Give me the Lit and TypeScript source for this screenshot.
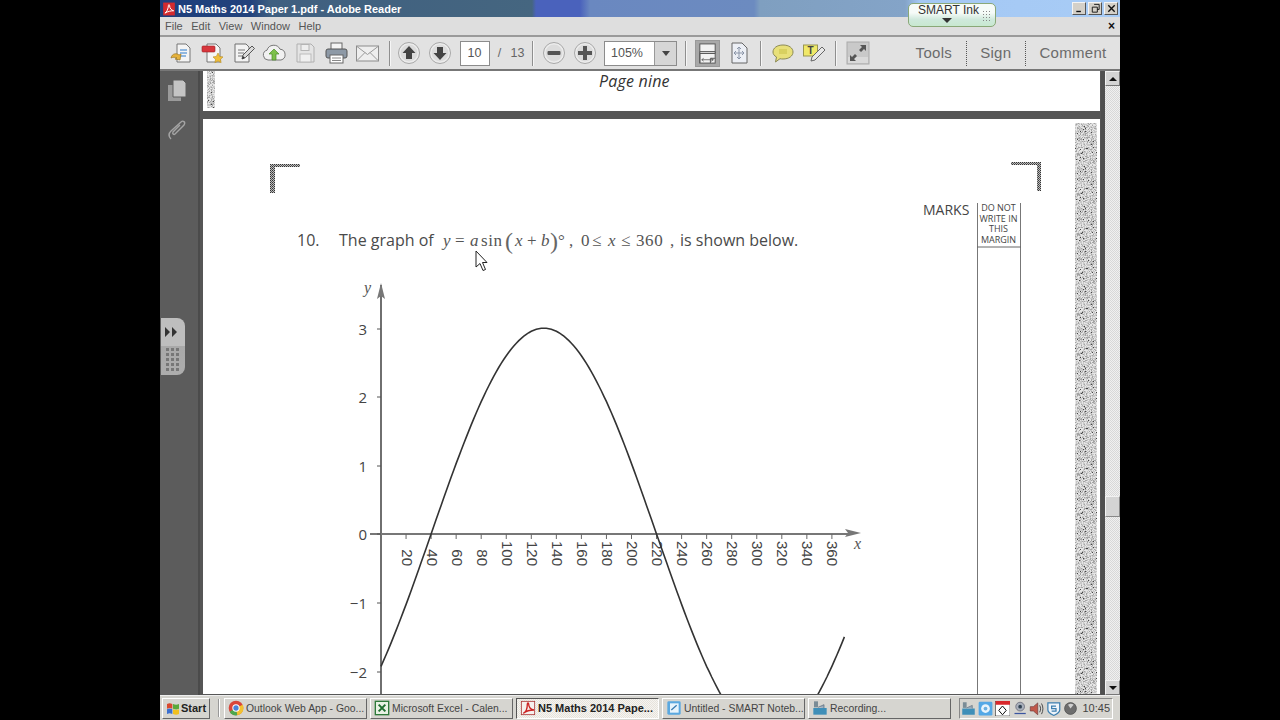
import { LitElement, html, css, svg } from 'lit';
import { customElement } from 'lit/decorators.js';

// seeded noise so the scanned speckle comes out the same each time
function speckle(id: string, size: number, dark: number) {
  let seed = 48271;
  const rnd = () => (seed = (seed * 16807) % 2147483647) / 2147483647;
  for (let i = 0; i < 10; i++) rnd();
  const dots = [];
  for (let y = 0; y < size; y++) {
    for (let x = 0; x < size; x++) {
      const r = rnd();
      if (r < dark) {
        const g = r < dark * 0.04 ? '#444' : r < dark * 0.35 ? '#a4a4a4' : '#c8c8c8';
        dots.push(svg`<rect x=${x} y=${y} width="1" height="1" fill=${g}></rect>`);
      }
    }
  }
  return svg`<pattern id=${id} width=${size} height=${size} patternUnits="userSpaceOnUse">
    <rect width=${size} height=${size} fill="#e6e6e6"></rect>${dots}</pattern>`;
}

const icon = (body: unknown, size = 24) =>
  html`<svg width=${size} height=${size} viewBox="0 0 24 24">${body}</svg>`;

const roundBtn = (glyph: unknown) => svg`
  <circle cx="12" cy="12" r="10.5" fill="#ececec" stroke="#a8a8a8"></circle>
  <circle cx="12" cy="12" r="8.5" fill="#dcdcdc"></circle>${glyph}`;

const TOOL_ICONS = {
  create: svg`<path d="M8 3h9l4 4v14H8z" fill="#f4f4f4" stroke="#777"></path>
    <path d="M11 9h7M11 12h7M11 15h6" stroke="#6fa3d8" stroke-width="1.4"></path>
    <path d="M2 17c1-5 6-5 8-3l2-1-1 6-5-1 2-1c-2-1-4-1-6 0z" fill="#e6b23c" stroke="#9a7420" stroke-width=".7"></path>`,
  pdfNew: svg`<path d="M7 3h9l4 4v14H7z" fill="#f6f6f6" stroke="#777"></path>
    <rect x="2" y="5" width="13" height="6" rx="1" fill="#d8363c" stroke="#9c2226" stroke-width=".6"></rect>
    <path d="M18 12l1.6 3.4 3.4.5-2.5 2.4.6 3.4-3.1-1.7-3.1 1.7.6-3.4L13 15.900l3.400-.5z" fill="#efbe3a" stroke="#b58a20" stroke-width=".6"></path>`,
  edit: svg`<path d="M4 3h11l3 3v15H4z" fill="#f3f3f3" stroke="#707070"></path>
    <path d="M7 9h7M7 12h6M7 15h5" stroke="#777"></path>
    <path d="M11 18l1-4 9-9 2.500 2.500-9 9z" fill="#d9d9d9" stroke="#555"></path>
    <path d="M11 18l1-3 2 2z" fill="#333"></path>`,
  cloud: svg`<path d="M6 19a5 5 0 0 1-1-9.800 7 7 0 0 1 13-1 5.500 5.500 0 0 1 1 10.800z" fill="#f1f1f1" stroke="#777"></path>
    <path d="M12 8l5 5h-3v6h-4v-6H7z" fill="#7cc04a" stroke="#4c8a28" stroke-width=".7"></path>`,
  save: svg`<path d="M4 3h14l3 3v15H4z" fill="#e4e4e4" stroke="#b0b0b0"></path>
    <rect x="8" y="3.500" width="8" height="6" fill="#eee" stroke="#b4b4b4"></rect>
    <rect x="7" y="13" width="11" height="8" fill="#f0f0f0" stroke="#bbb"></rect>`,
  print: svg`<rect x="7" y="2" width="11" height="7" fill="#f4f4f4" stroke="#666"></rect>
    <rect x="2" y="8" width="21" height="9" rx="2" fill="#8d99a6" stroke="#555"></rect>
    <rect x="6" y="14" width="13" height="8" fill="#fff" stroke="#666"></rect>
    <path d="M8 17h9M8 19.500h9" stroke="#888"></path>`,
  mail: svg`<rect x="1.500" y="5" width="22" height="15" fill="#eee" stroke="#8c8c8c"></rect>
    <path d="M2 5.500l10.500 8 10.500-8M2 19.500l8-8M23 19.500l-8-8" fill="none" stroke="#999"></path>`,
  up: roundBtn(svg`<path d="M12 5l6.500 7H15v6H9v-6H5.500z" fill="#444"></path>`),
  down: roundBtn(svg`<path d="M12 19l6.500-7H15V6H9v6H5.500z" fill="#444"></path>`),
  minus: roundBtn(svg`<rect x="5.500" y="10" width="13" height="4" rx="1" fill="#555"></rect>`),
  plus: roundBtn(svg`<path d="M10 5h4v5h5v4h-5v5h-4v-5H5v-4h5z" fill="#555"></path>`),
  fitWidth: svg`<rect x="4" y="2" width="16" height="20" fill="#f2f2f2" stroke="#555"></rect>
    <path d="M4 10h16v2H4zM4 12v10M15 22v-5l5 0" fill="#dcdcdc" stroke="#555"></path>
    <path d="M6 18.500h12M6 18.500l2-1.500M6 18.500l2 1.500M18 18.500l-2-1.500M18 18.500l-2 1.500" fill="none" stroke="#555" stroke-width=".8"></path>`,
  fitPage: svg`<path d="M5 2h10l5 5v15H5z" fill="#eceff5" stroke="#666"></path>
    <path d="M12 6v12M7 12h10M12 6l-2 2M12 6l2 2M12 18l-2-2M12 18l2-2M7 12l2-2M7 12l2 2M17 12l-2-2M17 12l-2 2" fill="none" stroke="#8a95a8"></path>`,
  comment: svg`<path d="M12 4c6 0 10 3 10 7s-4 7-10 7c-1 0-2 0-3-.3L4.500 21l1-5C3 14.700 2 13 2 11c0-4 4-7 10-7z" fill="#e8e07a" stroke="#8c8a55"></path>
    <rect x="8" y="8" width="8" height="5" fill="#d8d060"></rect>`,
  highlight: svg`<rect x="1.500" y="4" width="14" height="11" fill="#f0e868" stroke="#9a9650"></rect>
    <text x="8.500" y="13" text-anchor="middle" class="tiny">T</text>
    <path d="M9 20l1-4 10-10 3 3-10 10z" fill="#e8e8e8" stroke="#666"></path>`,
  expand: svg`<rect x="1" y="1" width="22" height="22" fill="#c9c9c9" stroke="#aaa"></rect>
    <rect x="2" y="16" width="20" height="6" fill="#dadada"></rect>
    <path d="M14 4h6v6l-2-2-3 3-2-2 3-3zM10 20H4v-6l2 2 3-3 2 2-3 3z" fill="#555"></path>`,
};

const ACROBAT = svg`<rect x="2" y="1" width="20" height="22" fill="#d32a2e"></rect>
  <path d="M5 19c3-1 6-8 6-13 0-2 2-2 2 0 0 5 3 8 7 9-4 0-10 1-15 4z" fill="none" stroke="#fff" stroke-width="1.700"></path>`;

const TASK_ICONS = {
  chrome: svg`<circle cx="12" cy="12" r="11" fill="#d9453a"></circle>
    <path d="M12 12L2.500 17.500A11 11 0 0 0 14 23z" fill="#4da84e"></path>
    <path d="M12 12l2 11a11 11 0 0 0 8-16z" fill="#f2c230"></path>
    <circle cx="12" cy="12" r="5.500" fill="#fff"></circle><circle cx="12" cy="12" r="4" fill="#4a82d8"></circle>`,
  excel: svg`<rect x="2" y="2" width="20" height="20" fill="#e8f2e4" stroke="#2e7a3a" stroke-width="2"></rect>
    <path d="M7 7l10 10M17 7L7 17" stroke="#1f6f30" stroke-width="3"></path>`,
  pdf: svg`<rect x="2" y="2" width="20" height="20" fill="#f6f0ee" stroke="#a33" stroke-width="1.200"></rect>
    <path d="M5 20c4-2 6-9 6-14 0-2 2-2 2 0 0 5 3 8 8 9-5 0-11 1-16 5z" fill="none" stroke="#c22" stroke-width="2"></path>`,
  smart: svg`<rect x="2" y="2" width="20" height="20" rx="2" fill="#5aa8e0"></rect>
    <rect x="6" y="5" width="13" height="14" fill="#e8f4fc"></rect><path d="M8 15l8-7" stroke="#3a7ab0" stroke-width="2"></path>`,
  rec: svg`<rect x="3" y="2" width="6" height="9" fill="#7a8c96"></rect><rect x="2" y="12" width="20" height="10" fill="#3f8fb8"></rect>
    <path d="M9 11l9-4v5" fill="#9ab" stroke="#567"></path>`,
};

const TRAY_ICONS = [
  svg`<rect x="3" y="2" width="6" height="9" fill="#7a8c96"></rect><rect x="2" y="12" width="20" height="10" fill="#3f8fb8"></rect><path d="M9 11l9-4v5" fill="#9ab" stroke="#567"></path>`,
  svg`<rect x="1" y="1" width="22" height="22" rx="2" fill="#54a8e6"></rect><circle cx="12" cy="12" r="7" fill="#e8f4fc"></circle><circle cx="12" cy="12" r="3" fill="#6cb0e0"></circle>`,
  svg`<rect x="1" y="0" width="23" height="24" fill="#fff" stroke="#333"></rect><rect x="1" y="0" width="23" height="6" fill="#d8282c"></rect><path d="M12 8l6 7-6 7-6-7z" fill="#fff" stroke="#111" stroke-width="1.600"></path>`,
  svg`<circle cx="13" cy="9" r="7" fill="#a9b0bb" stroke="#556"></circle><circle cx="13" cy="9" r="3" fill="#345"></circle><path d="M4 21h18v-2H4z" fill="#3a55a0"></path>`,
  svg`<path d="M2 9h5l7-6v19l-7-6H2z" fill="#c0584a" stroke="#633"></path><path d="M17 7c2 3 2 8 0 11M20 4c3 5 3 12 0 17" fill="none" stroke="#444" stroke-width="1.500"></path>`,
  svg`<path d="M3 3h19v11c0 5-5 7-9.500 9C8 21 3 19 3 14z" fill="#eef4fa" stroke="#3d7fb0" stroke-width="2"></path><path d="M16 8H9v4h7v4H9" fill="none" stroke="#3d7fb0" stroke-width="2"></path>`,
  svg`<circle cx="12" cy="12" r="9.500" fill="#6d6d6d" stroke="#444"></circle><path d="M12 12l5-6a8 8 0 0 0-9 0z" fill="#cfcfcf"></path>`,
];

const X_LABELS = Array.from({ length: 18 }, (_, i) => (i + 1) * 20);
const Y_LABELS = [
  { t: '3', y: 329 }, { t: '2', y: 397 }, { t: '1', y: 466 },
  { t: '0', y: 534 }, { t: '\u22121', y: 603 }, { t: '\u22122', y: 672 },
];
// y = a sin(x + b) piece by piece, set out by hand as the scan has it
const MATH = [
  { t: 'y', x: 443, c: 'mi' }, { t: '=', x: 455, c: 'mr' }, { t: 'a', x: 470, c: 'mi' },
  { t: 'sin', x: 481, c: 'mr' }, { t: 'x', x: 515, c: 'mi' }, { t: '+', x: 527, c: 'mr' },
  { t: 'b', x: 541, c: 'mi' }, { t: '\u00b0', x: 558, c: 'mr' }, { t: ',', x: 569, c: 'mr' },
  { t: '0', x: 581, c: 'mr' }, { t: '\u2264', x: 592, c: 'mr' }, { t: 'x', x: 608, c: 'mi' },
  { t: '\u2264', x: 621, c: 'mr' }, { t: '360', x: 636, c: 'mr' }, { t: ',', x: 670, c: 'mr' },
];

const PX_PER_DEG = 1.2525;
const PX_PER_UNIT = 68.6;
function curvePoints() {
  const pts: string[] = [];
  for (let d = 0; d <= 370; d += 2) {
    const y = 534 - 3 * Math.sin(((d - 40) * Math.PI) / 180) * PX_PER_UNIT;
    pts.push(`${(381 + d * PX_PER_DEG).toFixed(1)},${y.toFixed(1)}`);
  }
  return pts.join(' ');
}

@customElement('app-root')
export class AppRoot extends LitElement {
  static styles = css`
    :host {
      display: block;
      width: 1280px;
      height: 720px;
      background: #000;
      overflow: hidden;
      font-family: 'Liberation Sans', Arial, sans-serif;
    }
    svg { flex: none; }
    .window {
      position: relative;
      width: 960px;
      height: 720px;
      margin: 0 auto;
      display: flex;
      flex-direction: column;
    }
    .titlebar {
      height: 17px;
      flex: none;
      display: flex;
      align-items: center;
      gap: 2px;
      padding-left: 2px;
      background: linear-gradient(90deg, #1e3f7c 0, #22427c 90px, #3f5f80 110px, #456680 372px,
        #4a62bc 376px, #4a62bc 420px, #6a88c0 430px, #6c8bc0 594px, #7f9fc0 600px, #84a4c8 745px, #a4c8f4 760px, #a8ccf6 960px);
      color: #fff;
      font-weight: bold;
      font-size: 11px;
    }
    .title { flex: 1; }
    .winbtns { display: flex; gap: 2px; padding-right: 2px; }
    .winbtn {
      width: 14px;
      height: 13px;
      box-sizing: border-box;
      background: #d4d0c8;
      border: 1px solid;
      border-color: #f4f4f4 #555 #555 #f4f4f4;
      display: flex;
      align-items: center;
      justify-content: center;
    }
    .menubar {
      height: 18px;
      flex: none;
      display: flex;
      align-items: center;
      gap: 8.5px;
      padding: 0 5px;
      background: #dedede;
      color: #555;
      font-size: 11px;
    }
    .menuclose {
      margin-left: auto;
      color: #111;
      font-weight: bold;
      font-size: 12px;
    }
    .toolbar {
      height: 36px;
      flex: none;
      box-sizing: border-box;
      display: flex;
      align-items: center;
      padding-left: 5px;
      background: #e2e2e2;
      border-top: 2px solid #9a9a9a;
      border-bottom: 2px solid #777;
    }
    .tool {
      width: 31px;
      height: 26px;
      flex: none;
      display: flex;
      align-items: center;
      justify-content: center;
    }
    .tool.on svg { background: #a8a8a8; outline: 1px solid #999; padding: 1px 0; width: 23px; height: 23px; }
    .sep { width: 1px; height: 25px; flex: none; background: #8f8f8f; margin: 0 2px 0 7px; border-right: 1px solid #f6f6f6; }
    .sep.zoomsep { margin-right: 4.5px; }
    .sep.wide { margin: 0 5px 0 8px; }
    .sep.mid { margin: 0 5px 0 6px; }
    .field {
      box-sizing: border-box;
      height: 25px;
      flex: none;
      display: flex;
      align-items: center;
      background: #fff;
      border: 1px solid #8c8c8c;
      color: #555;
      font-size: 12.5px;
    }
    .pageno { width: 30px; margin-left: 4.5px; justify-content: center; }
    .pagecount { width: 35px; flex: none; color: #666; font-size: 12.5px; text-align: right; word-spacing: 6px; }
    .zoom { width: 73px; margin-left: 4px; padding-left: 6px; justify-content: space-between; }
    .caret { width: 21px; height: 23px; background: #d6d6d6; border-left: 1px solid #999; display: flex; align-items: center; justify-content: center; }
    .caret::after { content: ''; border: 4px solid transparent; border-top: 5px solid #444; border-bottom: 0; }
    .links { margin-left: auto; display: flex; height: 25px; }
    .link { padding: 0 13.5px; color: #6b6b6b; font-size: 15px; line-height: 23px; letter-spacing: .3px; }
    .link + .link { border-left: 1px dotted #555; }
    .main { flex: 1; min-height: 0; display: flex; background: #565656; }
    .nav { width: 40px; flex: none; position: relative; background: #5c5c5c; border-right: 2px solid #4b4b4b; display: flex; flex-direction: column; align-items: center; gap: 16px; padding: 7px 4px 0 0; box-sizing: border-box; }
    .handle {
      position: absolute;
      left: 1px;
      top: 247px;
      width: 24px;
      height: 57px;
      background: linear-gradient(#bebebe 0, #bebebe 50%, #a9a9a9 50%, #adadad);
      border-radius: 0 8px 8px 0;
    }
    .doc { flex: 1; min-width: 0; display: flex; flex-direction: column; gap: 8px; padding-left: 3px; }
    .page { display: block; background: #fff; flex: none; }
    .vgap { width: 4px; flex: none; background: #505050; }
    .scroll {
      width: 15px;
      flex: none;
      position: relative;
      display: flex;
      flex-direction: column;
      justify-content: space-between;
      background: repeating-conic-gradient(#f0f0f0 0 25%, #d8d8d8 0 50%) 0 0 / 2px 2px;
    }
    .sbtn {
      height: 15px;
      box-sizing: border-box;
      background: #d4d4d4;
      border: 1px solid;
      border-color: #f2f2f2 #777 #777 #f2f2f2;
      display: flex;
      align-items: center;
      justify-content: center;
    }
    .sbtn::after { content: ''; border: 4px solid transparent; }
    .sbtn.up::after { border-bottom: 4px solid #111; border-top: 0; }
    .sbtn.down::after { border-top: 4px solid #111; border-bottom: 0; }
    .thumb {
      position: absolute;
      left: 0;
      right: 0;
      top: 425px;
      height: 21px;
      box-sizing: border-box;
      background: #d4d4d4;
      border: 1px solid;
      border-color: #f2f2f2 #888 #888 #f2f2f2;
    }
    .taskbar {
      height: 25px;
      flex: none;
      box-sizing: border-box;
      display: flex;
      align-items: center;
      gap: 3px;
      padding-left: 2px;
      background: #d6d5d0;
      border-top: 1px solid #eee;
      color: #444;
      font-size: 10.4px;
    }
    .start, .task {
      height: 21px;
      box-sizing: border-box;
      display: flex;
      align-items: center;
      flex: none;
      border: 1px solid;
      border-color: #fff #666 #666 #fff;
      background: #d6d5d0;
      white-space: nowrap;
      overflow: hidden;
    }
    .start { width: 48px; padding-left: 2px; font-size: 11px; font-weight: bold; color: #222; }
    .tbsep { width: 1px; height: 18px; flex: none; margin: 0 1px 0 5px; background: #999; border-right: 1px solid #fff; }
    .task { width: 143px; padding-left: 3px; gap: 2px; }
    .task.active {
      border-color: #555 #fff #fff #555;
      background: repeating-conic-gradient(#f6f4f0 0 25%, #e6e3dc 0 50%) 0 0 / 2px 2px;
      font-size: 11px;
      font-weight: bold;
      color: #222;
    }
    .tray {
      width: 154px;
      height: 21px;
      box-sizing: border-box;
      flex: none;
      margin-left: 5px;
      display: flex;
      align-items: center;
      gap: 2px;
      padding-left: 1px;
      border: 1px solid;
      border-color: #888 #fff #fff #888;
    }
    .clock { margin-left: auto; padding-right: 2px; font-size: 11px; }
    .ink {
      position: absolute;
      left: 748px;
      top: 3px;
      width: 88px;
      height: 24px;
      box-sizing: border-box;
      border: 1px solid #8aa878;
      border-radius: 5px;
      background: linear-gradient(#f6fbf8 0, #f6fbf8 40%, #cfe9dc 70%, #c8e8d0);
      color: #333;
      font-size: 12px;
      line-height: 13px;
      padding-left: 9px;
    }
    .ink::after { content: ''; position: absolute; left: 33px; top: 14px; border: 5px solid transparent; border-top: 5px solid #333; border-bottom: 0; }
    .inkgrip { position: absolute; right: 4px; top: 6px; width: 9px; height: 11px; background: radial-gradient(circle, #888 0 1px, transparent 1px) 0 0 / 3px 3px; }
    .cursor { position: absolute; left: 315px; top: 250px; }
    .tiny { font: bold 10px 'Liberation Sans', sans-serif; fill: #444; }
    .prose { font: 16px 'Open Sans', sans-serif; fill: #4a4a4a; }
    .mi { font: italic 17px 'Liberation Serif', serif; fill: #555; }
    .mr { font: 17px 'Liberation Serif', serif; fill: #555; letter-spacing: .6px; }
    .paren { font: 24px 'Liberation Serif', serif; fill: #666; }
    .tick { font: 15px 'Liberation Sans', sans-serif; fill: #444; }
    .ylab { font: 15px 'Open Sans', sans-serif; fill: #444; }
    .axislab { font: italic 16px 'Liberation Serif', serif; fill: #555; }
    .marks { font: 14px 'Open Sans', sans-serif; fill: #444; }
    .margin { font: 9px 'Open Sans', sans-serif; fill: #444; }
    .pagenine { font: italic 16px 'Open Sans', sans-serif; fill: #333; letter-spacing: .2px; }
  `;

  private tool(body: unknown, on = false) {
    return html`<div class="tool ${on ? 'on' : ''}">${icon(body)}</div>`;
  }

  private renderGraph() {
    return html`<svg class="page" width="897" height="575" viewBox="203 119 897 575">
      <defs>
        ${speckle('grain', 40, 0.6)}
        <pattern id="mark" width="2" height="2" patternUnits="userSpaceOnUse">
          <rect width="2" height="2" fill="#bdbdbd"></rect>
          <rect width="1" height="1" fill="#333"></rect>
          <rect x="1" y="1" width="1" height="1" fill="#555"></rect>
        </pattern>
      </defs>
      <rect x="1075" y="123" width="22" height="571" fill="url(#grain)"></rect>
      <path d="M270 164h30v3h-25v26h-5zM1011 162h30v29h-4v-26h-26z" fill="url(#mark)"></path>

      <text class="prose" x="297" y="246">10.</text>
      <text class="prose" x="339" y="246">The graph of</text>
      ${MATH.map((m) => svg`<text class=${m.c} x=${m.x} y="246">${m.t}</text>`)}
      <text class="paren" x="505" y="249">(</text>
      <text class="paren" x="550" y="249">)</text>
      <text class="prose" x="680" y="246">is shown below.</text>

      <text class="marks" x="923" y="215">MARKS</text>
      ${['DO NOT', 'WRITE IN', 'THIS', 'MARGIN'].map(
        (t, i) => svg`<text class="margin" x="998.500" y=${211 + i * 10.6} text-anchor="middle">${t}</text>`
      )}
      <path d="M977.500 203V694M1020.500 203V694" stroke="#777" fill="none"></path>
      <path d="M977 247h44" stroke="#666" fill="none"></path>

      <path d="M381 285V694" stroke="#333" stroke-width="1.400"></path>
      <path d="M381 283l-4 16 4-3 4 3z" fill="#777"></path>
      <path d="M370 534H848" stroke="#777" stroke-width="2"></path>
      <path d="M861 533l-16-4 3 4-3 4z" fill="#777"></path>
      ${X_LABELS.map((d) => {
        const x = 381 + d * PX_PER_DEG;
        return svg`<path d="M${x} 534v5" stroke="#666"></path>
          <text class="tick" text-anchor="end" transform="translate(${x - 4.5} 566) rotate(90)">${d}</text>`;
      })}
      ${Y_LABELS.map(
        (l) => svg`<path d="M377 ${l.y}h4" stroke="#555"></path>
          <text class="ylab" x="367" y=${l.y + 5.500} text-anchor="end">${l.t}</text>`
      )}
      <text class="axislab" x="364" y="293">y</text>
      <text class="axislab" x="854" y="549">x</text>
      <polyline points=${curvePoints()} fill="none" stroke="#333" stroke-width="1.600"></polyline>
    </svg>`;
  }

  render() {
    return html`<div class="window">
      <div class="titlebar">
        ${icon(ACROBAT, 14)}
        <span class="title">N5 Maths 2014 Paper 1.pdf - Adobe Reader</span>
        <div class="winbtns">
          <div class="winbtn">${icon(svg`<rect x="5" y="17" width="10" height="3" fill="#111"></rect>`, 11)}</div>
          <div class="winbtn">${icon(svg`<path d="M9 3h11v11h-4M5 9h11v11H5z" fill="none" stroke="#111" stroke-width="2"></path>`, 11)}</div>
          <div class="winbtn">${icon(svg`<path d="M5 5l14 14M19 5L5 19" stroke="#111" stroke-width="3"></path>`, 11)}</div>
        </div>
      </div>
      <div class="menubar">
        <span>File</span><span>Edit</span><span>View</span><span>Window</span><span>Help</span>
        <span class="menuclose">\u00d7</span>
      </div>
      <div class="toolbar">
        ${this.tool(TOOL_ICONS.create)}${this.tool(TOOL_ICONS.pdfNew)}${this.tool(TOOL_ICONS.edit)}
        ${this.tool(TOOL_ICONS.cloud)}${this.tool(TOOL_ICONS.save)}${this.tool(TOOL_ICONS.print)}${this.tool(TOOL_ICONS.mail)}
        <div class="sep"></div>
        ${this.tool(TOOL_ICONS.up)}${this.tool(TOOL_ICONS.down)}
        <div class="field pageno">10</div>
        <div class="pagecount">/ 13</div>
        <div class="sep zoomsep"></div>
        ${this.tool(TOOL_ICONS.minus)}${this.tool(TOOL_ICONS.plus)}
        <div class="field zoom">105%<div class="caret"></div></div>
        <div class="sep wide"></div>
        ${this.tool(TOOL_ICONS.fitWidth, true)}${this.tool(TOOL_ICONS.fitPage)}
        <div class="sep mid"></div>
        ${this.tool(TOOL_ICONS.comment)}${this.tool(TOOL_ICONS.highlight)}
        <div class="sep mid"></div>
        ${this.tool(TOOL_ICONS.expand)}
        <div class="links">
          <div class="link">Tools</div><div class="link">Sign</div><div class="link">Comment</div>
        </div>
      </div>
      <div class="main">
        <div class="nav">
          ${icon(svg`<rect x="3" y="7" width="13" height="16" fill="#9a9a9a"></rect>
            <path d="M8 2h10l3 3v14H8z" fill="#c4c4c4" stroke="#5c5c5c"></path>`)}
          ${icon(svg`<path d="M6 21c-3-3-2-6 0-8L16 4c2-2 5 0 3 3l-9 9c-1 1-3 0-2-2l7-7" fill="none" stroke="#a4a4a4" stroke-width="1.400"></path>`)}
          <div class="handle">
            ${html`<svg width="24" height="57" viewBox="0 0 24 57">
              <path d="M4 9l5 5-5 5zM11 9l5 5-5 5z" fill="#333"></path>
              ${[30, 35, 40, 45, 50].flatMap((y) =>
                [5, 10, 15].map((x) => svg`<rect x=${x} y=${y} width="3" height="3" fill="#777"></rect>`)
              )}
            </svg>`}
          </div>
        </div>
        <div class="doc">
          <svg class="page" width="897" height="40" viewBox="203 71 897 40">
            <defs>${speckle('grainTop', 40, 0.6)}</defs>
            <rect x="207" y="71" width="8" height="37" fill="url(#grainTop)"></rect>
            <text class="pagenine" x="599" y="87">Page nine</text>
          </svg>
          ${this.renderGraph()}
        </div>
        <div class="vgap"></div>
        <div class="scroll">
          <div class="sbtn up"></div>
          <div class="thumb"></div>
          <div class="sbtn down"></div>
        </div>
      </div>
      <div class="taskbar">
        <div class="start">${icon(svg`<path d="M3 6c4-2 5-1 8 0v7c-3-1-4-2-8 0z" fill="#d9482e"></path>
          <path d="M12 6c3 1 5 2 9 0v7c-4 2-6 1-9 0z" fill="#5aa83a"></path>
          <path d="M3 14c4-2 5-1 8 0v7c-3-1-4-2-8 0z" fill="#3a6fd0"></path>
          <path d="M12 14c3 1 5 2 9 0v7c-4 2-6 1-9 0z" fill="#f0c020"></path>`, 16)}Start</div>
        <div class="tbsep"></div>
        <div class="task">${icon(TASK_ICONS.chrome, 16)}Outlook Web App - Goo...</div>
        <div class="task">${icon(TASK_ICONS.excel, 16)}Microsoft Excel - Calen...</div>
        <div class="task active">${icon(TASK_ICONS.pdf, 16)}N5 Maths 2014 Pape...</div>
        <div class="task">${icon(TASK_ICONS.smart, 16)}Untitled - SMART Noteb...</div>
        <div class="task">${icon(TASK_ICONS.rec, 16)}Recording...</div>
        <div class="tray">
          ${TRAY_ICONS.map((t) => icon(t, 15))}
          <span class="clock">10:45</span>
        </div>
      </div>
      <div class="ink">SMART Ink<div class="inkgrip"></div></div>
      <svg class="cursor" width="14" height="22" viewBox="0 0 14 22">
        <path d="M1 1v16l4-3.500 3 7 2.500-1-3-7H12z" fill="#fff" stroke="#222"></path>
      </svg>
    </div>`;
  }
}
